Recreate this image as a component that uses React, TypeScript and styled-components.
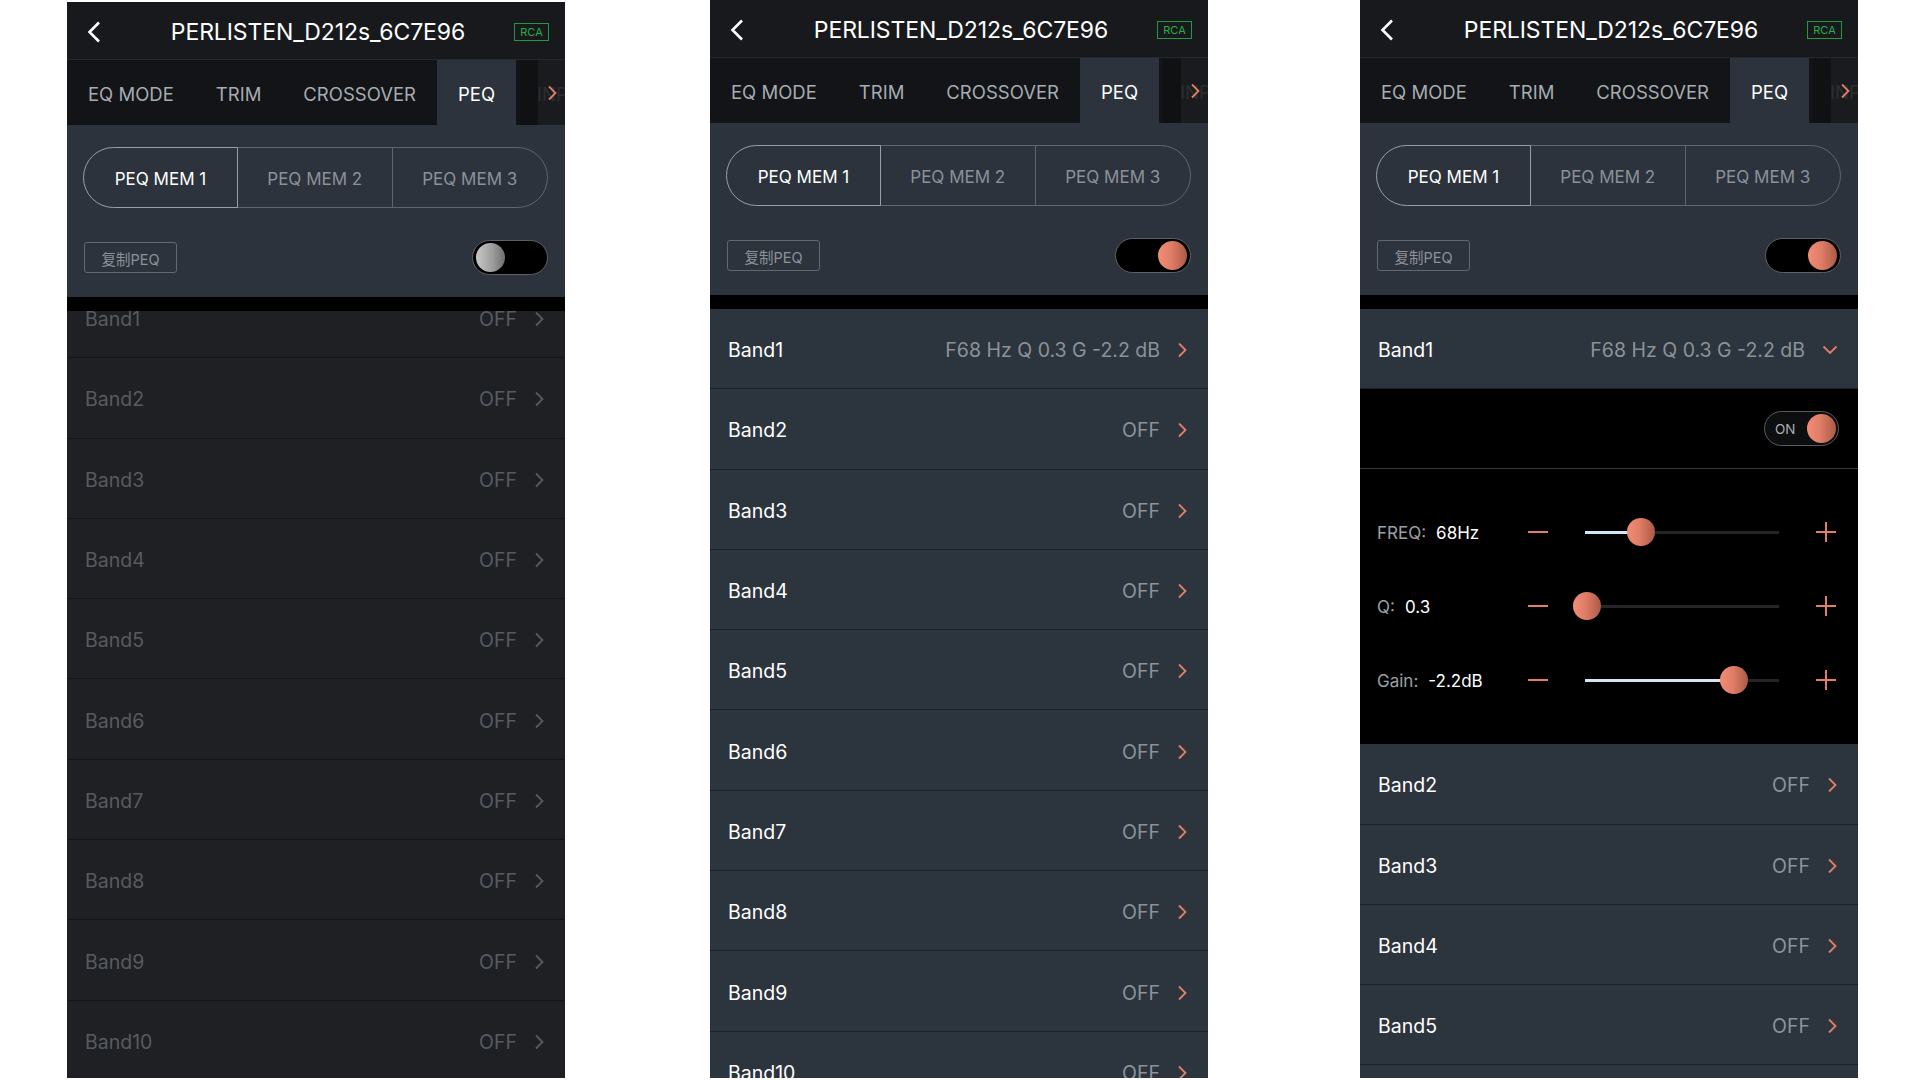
import React from 'react'
import styled, { createGlobalStyle, css } from 'styled-components'

const GlobalStyle = createGlobalStyle`
  html, body {
    margin: 0;
    padding: 0;
    background: #ffffff;
  }
  * {
    box-sizing: border-box;
  }
  body {
    font-family: Inter, 'Noto Sans CJK SC', sans-serif;
  }
`

const ORANGE = '#e27f66'
const KNOB = 'linear-gradient(to right, #f28d75 0%, #e07d66 45%, #a95a48 100%)'

type Band = { name: string; value: string }

const offBands = (from: number, to: number): Band[] =>
  Array.from({ length: to - from + 1 }, (_, i) => ({
    name: `Band${from + i}`,
    value: 'OFF',
  }))

const band1: Band = { name: 'Band1', value: 'F68 Hz Q 0.3 G -2.2 dB' }

const sliders = [
  { label: 'FREQ:', value: '68Hz', pos: 0.29 },
  { label: 'Q:', value: '0.3', pos: 0.01 },
  { label: 'Gain:', value: '-2.2dB', pos: 0.77 },
]

function Chevron({ dir = 'right', color }: { dir?: 'right' | 'down' | 'left'; color: string }) {
  if (dir === 'down') {
    return (
      <svg width="16" height="10" viewBox="0 0 16 10">
        <path d="M1.5 1.5 L8 8 L14.5 1.5" fill="none" stroke={color} strokeWidth="1.8" />
      </svg>
    )
  }
  if (dir === 'left') {
    return (
      <svg width="14" height="22" viewBox="0 0 14 22">
        <path d="M12 1.5 L2.5 11 L12 20.5" fill="none" stroke={color} strokeWidth="2.6" />
      </svg>
    )
  }
  return (
    <svg width="11" height="16" viewBox="0 0 11 16">
      <path d="M2 1.5 L8.5 8 L2 14.5" fill="none" stroke={color} strokeWidth="1.8" />
    </svg>
  )
}

function Header() {
  return (
    <TopBar>
      <BackBtn>
        <Chevron dir="left" color="#ffffff" />
      </BackBtn>
      <Title>PERLISTEN_D212s_6C7E96</Title>
      <Badge>RCA</Badge>
    </TopBar>
  )
}

function Tabs() {
  return (
    <TabBar>
      <Tab>EQ MODE</Tab>
      <Tab>TRIM</Tab>
      <Tab>CROSSOVER</Tab>
      <Tab $active>PEQ</Tab>
      <Tab>INPUT</Tab>
      <TabMore>
        <Chevron color={ORANGE} />
      </TabMore>
    </TabBar>
  )
}

function Settings({ on }: { on: boolean }) {
  return (
    <SettingsArea>
      <Segment>
        <SegItem $active>PEQ MEM 1</SegItem>
        <SegItem>PEQ MEM 2</SegItem>
        <SegItem>PEQ MEM 3</SegItem>
      </Segment>
      <ControlRow>
        <CopyButton>复制PEQ</CopyButton>
        <Switch $on={on}>
          <Knob $on={on} />
        </Switch>
      </ControlRow>
    </SettingsArea>
  )
}

function BandRow({ band, dim, open }: { band: Band; dim?: boolean; open?: boolean }) {
  return (
    <Row $dim={dim}>
      <BandName $dim={dim}>{band.name}</BandName>
      <BandRight>
        <BandValue $dim={dim}>{band.value}</BandValue>
        <Chevron dir={open ? 'down' : 'right'} color={dim ? '#575b61' : ORANGE} />
      </BandRight>
    </Row>
  )
}

function BandDetail() {
  return (
    <Detail>
      <DetailToggleRow>
        <OnSwitch>
          <OnText>ON</OnText>
          <OnKnob />
        </OnSwitch>
      </DetailToggleRow>
      <SliderList>
        {sliders.map((s) => (
          <SliderRow key={s.label}>
            <SliderLabel>
              <span>{s.label}</span>
              <SliderValue>{s.value}</SliderValue>
            </SliderLabel>
            <Minus />
            <Track>
              <TrackFill style={{ width: `${s.pos * 100}%` }} />
              <SliderKnob style={{ left: `${s.pos * 100}%` }} />
            </Track>
            <Plus />
          </SliderRow>
        ))}
      </SliderList>
    </Detail>
  )
}

export default function App() {
  return (
    <>
      <GlobalStyle />
      <Page>
        <Phone $left={67} $top={2}>
          <Header />
          <Tabs />
          <Settings on={false} />
          <BlackBar />
          <ListViewport>
            <List $scroll={33}>
              {offBands(1, 10).map((b) => (
                <BandRow key={b.name} band={b} dim />
              ))}
            </List>
          </ListViewport>
        </Phone>

        <Phone $left={145}>
          <Header />
          <Tabs />
          <Settings on />
          <BlackBar />
          <ListViewport>
            <List>
              <BandRow band={band1} />
              {offBands(2, 10).map((b) => (
                <BandRow key={b.name} band={b} />
              ))}
            </List>
          </ListViewport>
        </Phone>

        <Phone $left={152}>
          <Header />
          <Tabs />
          <Settings on />
          <BlackBar />
          <ListViewport>
            <List>
              <BandRow band={band1} open />
              <BandDetail />
              {offBands(2, 10).map((b) => (
                <BandRow key={b.name} band={b} />
              ))}
            </List>
          </ListViewport>
        </Phone>
      </Page>
    </>
  )
}

const Page = styled.main`
  display: flex;
  align-items: flex-start;
  width: 1920px;
  height: 1080px;
  overflow: hidden;
  background: #ffffff;
`

const Phone = styled.section<{ $left: number; $top?: number }>`
  width: 498px;
  height: ${(p) => 1078 - (p.$top || 0)}px;
  margin-left: ${(p) => p.$left}px;
  margin-top: ${(p) => p.$top || 0}px;
  flex-shrink: 0;
  display: flex;
  flex-direction: column;
  background: #2c333d;
  overflow: hidden;
`

const TopBar = styled.header`
  height: 58px;
  display: grid;
  grid-template-columns: 1fr auto 1fr;
  align-items: center;
  padding: 3px 16px 0 20px;
  background: #17191c;
  border-bottom: 1px solid #24272b;
`

const BackBtn = styled.div`
  display: flex;
  align-items: center;
`

const Title = styled.h1`
  margin: 0;
  font-size: 23px;
  font-weight: 400;
  color: #ffffff;
  letter-spacing: -0.1px;
`

const Badge = styled.span`
  justify-self: end;
  width: 35px;
  height: 18px;
  border: 1px solid #1f9a3e;
  color: #27ad4a;
  font-size: 11px;
  line-height: 16px;
  text-align: center;
`

const TabBar = styled.nav`
  position: relative;
  height: 65px;
  display: flex;
  background: #121417;
  overflow: hidden;
`

const Tab = styled.div<{ $active?: boolean }>`
  flex-shrink: 0;
  display: flex;
  align-items: center;
  padding: 2px 21px 0;
  font-size: 18.5px;
  white-space: nowrap;
  color: #a7acb2;
  ${(p) =>
    p.$active &&
    css`
      background: #2c333d;
      color: #ffffff;
    `}
`

const TabMore = styled.div`
  position: absolute;
  top: 0;
  right: 0;
  bottom: 0;
  width: 45px;
  display: flex;
  align-items: center;
  justify-content: flex-end;
  padding-right: 7px;
  background: linear-gradient(to right, #0f1113 0 18px, rgba(26, 28, 31, 0.88) 18px);
`

const SettingsArea = styled.div`
  padding: 22px 17px 22px 16px;
  background: #2c333d;
`

const Segment = styled.div`
  display: grid;
  grid-template-columns: 1fr 1fr 1fr;
  height: 61px;
`

const SegItem = styled.div<{ $active?: boolean }>`
  display: flex;
  align-items: center;
  justify-content: center;
  padding-top: 2px;
  font-size: 17px;
  color: #8b9198;
  border: 1.5px solid #5f656c;
  margin-left: -1.5px;

  &:first-child {
    margin-left: 0;
    border-radius: 31px 0 0 31px;
  }
  &:last-child {
    border-radius: 0 31px 31px 0;
  }

  ${(p) =>
    p.$active &&
    css`
      position: relative;
      z-index: 1;
      color: #ffffff;
      border-color: #9a9fa6;
    `}
`

const ControlRow = styled.div`
  display: flex;
  align-items: center;
  justify-content: space-between;
  margin-top: 32px;
`

const CopyButton = styled.div`
  width: 93px;
  height: 31px;
  margin-left: 1px;
  padding-top: 1px;
  display: flex;
  align-items: center;
  justify-content: center;
  border: 1.5px solid #62686f;
  border-radius: 3px;
  color: #8c9298;
  font-size: 14.5px;
`

const Switch = styled.div<{ $on: boolean }>`
  width: 76px;
  height: 35px;
  padding: 2px 3px;
  display: flex;
  align-items: center;
  justify-content: ${(p) => (p.$on ? 'flex-end' : 'flex-start')};
  border: 1.5px solid #5c6168;
  border-radius: 18px;
  background: #000000;
`

const Knob = styled.div<{ $on: boolean }>`
  width: 29px;
  height: 29px;
  border-radius: 50%;
  background: ${(p) =>
    p.$on ? KNOB : 'linear-gradient(to right, #c8c8c8 0%, #9a9a9a 60%, #6e6e6e 100%)'};
`

const BlackBar = styled.div`
  height: 14px;
  flex-shrink: 0;
  background: #000000;
`

const ListViewport = styled.div`
  flex: 1;
  overflow: hidden;
`

const List = styled.div<{ $scroll?: number }>`
  display: flex;
  flex-direction: column;
  margin-top: ${(p) => -(p.$scroll || 0)}px;
`

const Row = styled.div<{ $dim?: boolean }>`
  flex-shrink: 0;
  height: 80.3px;
  display: flex;
  align-items: center;
  justify-content: space-between;
  padding: 3px 20px 0 18px;
  background: ${(p) => (p.$dim ? '#1e2024' : '#2c343e')};
  border-bottom: 1.5px solid ${(p) => (p.$dim ? '#131518' : '#1c2128')};
`

const BandName = styled.span<{ $dim?: boolean }>`
  font-size: 19.5px;
  color: ${(p) => (p.$dim ? '#575b61' : '#ffffff')};
`

const BandRight = styled.div`
  display: flex;
  align-items: center;
  gap: 17px;
`

const BandValue = styled.span<{ $dim?: boolean }>`
  font-size: 19.5px;
  color: ${(p) => (p.$dim ? '#575b61' : '#8c9298')};
`

const Detail = styled.div`
  flex-shrink: 0;
  background: #000000;
`

const DetailToggleRow = styled.div`
  height: 80px;
  display: flex;
  align-items: center;
  justify-content: flex-end;
  padding-right: 19px;
  border-bottom: 1px solid #36393e;
`

const OnSwitch = styled.div`
  width: 75px;
  height: 35px;
  padding: 0 2px 0 10px;
  display: flex;
  align-items: center;
  justify-content: space-between;
  border: 1.5px solid #575b61;
  border-radius: 18px;
  background: #0d0e10;
`

const OnText = styled.span`
  font-size: 13.5px;
  color: #a9adb2;
`

const OnKnob = styled.div`
  width: 29px;
  height: 29px;
  border-radius: 50%;
  background: ${KNOB};
`

const SliderList = styled.div`
  padding: 26px 0 27px;
`

const SliderRow = styled.div`
  height: 74px;
  display: grid;
  grid-template-columns: 114px 20px 1fr 20px;
  column-gap: 37px;
  align-items: center;
  padding: 0 22px 0 17px;
`

const SliderLabel = styled.div`
  display: flex;
  gap: 10px;
  padding-top: 2px;
  font-size: 17px;
  white-space: nowrap;
  color: #9ba0a6;
`

const SliderValue = styled.span`
  color: #ffffff;
`

const Minus = styled.div`
  width: 20px;
  height: 2px;
  background: ${ORANGE};
`

const Plus = styled.div`
  width: 20px;
  height: 20px;
  background: linear-gradient(${ORANGE}, ${ORANGE}) center / 20px 2px no-repeat,
    linear-gradient(${ORANGE}, ${ORANGE}) center / 2px 20px no-repeat;
`

const Track = styled.div`
  position: relative;
  height: 3px;
  background: #232528;
`

const TrackFill = styled.div`
  height: 100%;
  background: #d3e6f5;
`

const SliderKnob = styled.div`
  position: absolute;
  top: 50%;
  width: 28px;
  height: 28px;
  margin-left: -14px;
  margin-top: -14px;
  border-radius: 50%;
  background: ${KNOB};
`
